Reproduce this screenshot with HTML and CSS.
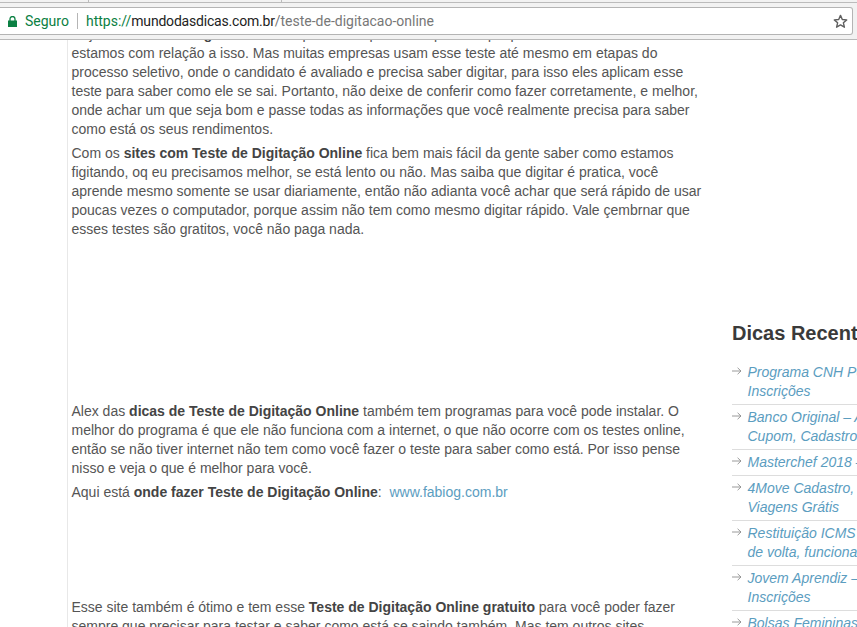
FILE: index.html
```html
<!DOCTYPE html>
<html lang="pt-BR">
<head>
<meta charset="utf-8">
<title>Teste de Digitação Online</title>
<link rel="stylesheet" href="styles.css">
</head>
<body>
<svg class="sprite" width="0" height="0"><symbol id="arrow" viewBox="0 0 10 8"><path d="M0 4h9M5.6 .8L9 4 5.6 7.2" fill="none" stroke="#8e8e8e" stroke-width=".9"/></symbol></svg>
<header class="chrome">
  <div class="tabstrip"><span class="tab tab-first"></span><span class="tab tab-second"></span></div>
  <div class="omnibox">
    <svg class="lock" width="9" height="11" viewBox="0 0 9 11"><path d="M2 5V3a2.5 2.5 0 0 1 5 0V5" fill="none" stroke="#0b8043" stroke-width="1.3"/><rect x="0" y="4.5" width="9" height="6.5" fill="#0b8043"/></svg>
    <span class="secure">Seguro</span>
    <span class="divider"></span>
    <span class="url"><span class="scheme">https://</span><span class="host">mundodasdicas.com.br</span><span class="path">/teste-de-digitacao-online</span></span>
    <svg class="star" width="15" height="15" viewBox="0 0 15 15"><path d="M7.5 1.4l1.8 4.1 4.4.4-3.3 2.9 1 4.4-3.9-2.3-3.9 2.3 1-4.4L1.3 5.9l4.4-.4z" fill="none" stroke="#5f5f5f" stroke-width="1.4" stroke-linejoin="round"/></svg>
  </div>
</header>
<div class="page">
  <main class="article">
    <p>Hoje em dia <strong>saber digitar</strong> é muito importante e por isso é preciso que possamos saber como estamos com relação a isso. Mas muitas empresas usam esse teste até mesmo em etapas do processo seletivo, onde o candidato é avaliado e precisa saber digitar, para isso eles aplicam esse teste para saber como ele se sai. Portanto, não deixe de conferir como fazer corretamente, e melhor, onde achar um que seja bom e passe todas as informações que você realmente precisa para saber como está os seus rendimentos.</p>
    <p>Com os <strong>sites com Teste de Digitação Online</strong> fica bem mais fácil da gente saber como estamos figitando, oq eu precisamos melhor, se está lento ou não. Mas saiba que digitar é pratica, você aprende mesmo somente se usar diariamente, então não adianta você achar que será rápido de usar poucas vezes o computador, porque assim não tem como mesmo digitar rápido. Vale çembrnar que esses testes são gratitos, você não paga nada.</p>
    <div class="ad ad-large"></div>
    <p>Alex das <strong>dicas de Teste de Digitação Online</strong> também tem programas para você pode instalar. O melhor do programa é que ele não funciona com a internet, o que não ocorre com os testes online, então se não tiver internet não tem como você fazer o teste para saber como está. Por isso pense nisso e veja o que é melhor para você.</p>
    <p>Aqui está <strong>onde fazer Teste de Digitação Online</strong>:&nbsp; <a href="#">www.fabiog.com.br</a></p>
    <div class="ad ad-small"></div>
    <p>Esse site também é ótimo e tem esse <strong>Teste de Digitação Online gratuito</strong> para você poder fazer sempre que precisar para testar e saber como está se saindo também. Mas tem outros sites.</p>
  </main>
  <aside class="sidebar">
    <h2>Dicas Recentes</h2>
    <ul>
      <li><svg class="arrow" width="10" height="8"><use href="#arrow"/></svg><a href="#">Programa CNH Popular<br>Inscrições</a></li>
      <li><svg class="arrow" width="10" height="8"><use href="#arrow"/></svg><a href="#">Banco Original – Abrir<br>Cupom, Cadastro</a></li>
      <li><svg class="arrow" width="10" height="8"><use href="#arrow"/></svg><a href="#">Masterchef 2018 – Inscrições</a></li>
      <li><svg class="arrow" width="10" height="8"><use href="#arrow"/></svg><a href="#">4Move Cadastro, Ganhe<br>Viagens Grátis</a></li>
      <li><svg class="arrow" width="10" height="8"><use href="#arrow"/></svg><a href="#">Restituição ICMS – Dinheiro<br>de volta, funciona</a></li>
      <li><svg class="arrow" width="10" height="8"><use href="#arrow"/></svg><a href="#">Jovem Aprendiz – Vagas<br>Inscrições</a></li>
      <li><svg class="arrow" width="10" height="8"><use href="#arrow"/></svg><a href="#">Bolsas Femininas</a></li>
    </ul>
  </aside>
</div>
</body>
</html>
```
FILE: styles.css
```css
* { box-sizing: border-box; }
html, body { margin: 0; height: 100%; overflow: hidden; background: #fff; }
body { width: 857px; height: 627px; font-family: "Liberation Sans", Arial, sans-serif; }
.sprite { position: absolute; }

.chrome { position: relative; z-index: 1; height: 40px; background: #f2f2f2; border-bottom: 1px solid #b9b9b9; }
.tabstrip { display: flex; height: 3px; border-bottom: 1px solid #bbb; }
.tab { height: 3px; border-right: 1px solid #bbb; }
.tab-first { width: 89px; }
.tab-second { width: 193px; }
.omnibox { display: flex; align-items: center; height: 28px; margin: 4px 4px 0 0; background: #fff; border: 1px solid #b4b4b4; border-left: 0; border-radius: 0 3px 3px 0; padding: 0 4px 0 8px; }
.lock { flex: none; }
.secure { margin-left: 8px; font: 14px "Roboto", sans-serif; color: #0b8043; }
.divider { width: 1px; height: 16px; margin: 0 8px 0 8px; background: #b5b5b5; }
.url { flex: 1; font: 14px "Roboto", sans-serif; color: #777; }
.scheme { color: #0b8043; }
.host { color: #222; letter-spacing: -.2px; }
.star { flex: none; }

.page { display: flex; margin-top: -15px; height: 602px; overflow: hidden; }
.article { flex: none; width: 636px; margin-left: 67px; padding-left: 3.5px; border-left: 1px solid #e8e8e8; font-size: 14px; line-height: 19px; color: #555; }
.article p { margin: 0 0 5px; }
.article strong { font-weight: bold; color: #444; }
.article a { color: #5b9dbf; text-decoration: none; }
.ad-large { height: 158px; }
.ad-small { height: 91px; }

.sidebar { flex: none; width: 260px; margin-left: 29px; padding-top: 296px; }
.sidebar h2 { margin: 0 0 15px; font-size: 20px; line-height: 24px; font-weight: bold; color: #3a3a3a; white-space: nowrap; }
.sidebar ul { margin: 0; padding: 0; list-style: none; }
.sidebar li { position: relative; padding: 3px 0 3px 15.5px; border-bottom: 1px solid #ddd; font-size: 14px; line-height: 19px; font-style: italic; white-space: nowrap; }
.arrow { position: absolute; left: 0; top: 7px; }
.sidebar a { color: #5b9dbf; text-decoration: none; }
```
